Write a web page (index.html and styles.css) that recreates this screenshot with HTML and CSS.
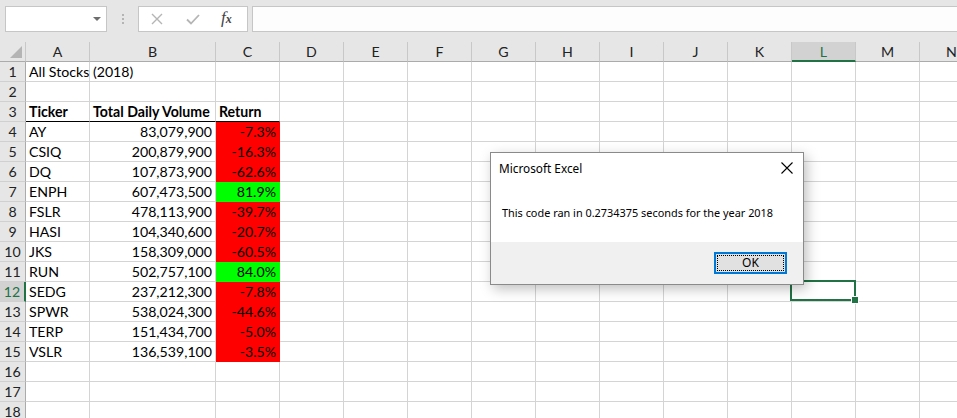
FILE: index.html
```html
<!DOCTYPE html>
<html>
<head>
<meta charset="utf-8">
<link rel="stylesheet" href="styles.css">
</head>
<body>
<div class="app">
  <div class="topbar">
    <div class="namebox"><span class="dd"></span></div>
    <div class="dots"><i></i><i></i><i></i></div>
    <div class="fbtns">
      <svg class="ic-x" width="12" height="12" viewBox="0 0 12 12"><path d="M1 1L11 11M11 1L1 11" stroke="#b5b5b5" stroke-width="1.4" fill="none"/></svg>
      <svg class="ic-ok" width="14" height="11" viewBox="0 0 14 11"><path d="M1 5.5L5 9.5L13 1" stroke="#b5b5b5" stroke-width="1.8" fill="none"/></svg>
      <span class="fx">f<span>x</span></span>
    </div>
    <div class="finput"></div>
  </div>

  <div class="sheet">
    <div class="row hdr">
      <div class="corner"><span class="tri"></span></div>
      <div class="ch">A</div><div class="ch">B</div><div class="ch">C</div><div class="ch">D</div><div class="ch">E</div><div class="ch">F</div><div class="ch">G</div><div class="ch">H</div><div class="ch">I</div><div class="ch">J</div><div class="ch">K</div><div class="ch sel">L</div><div class="ch">M</div><div class="ch">N</div>
    </div>
    <div class="row"><div class="rh">1</div><div class="c">All Stocks (2018)</div><div class="c"></div><div class="c"></div><div class="c"></div><div class="c"></div><div class="c"></div><div class="c"></div><div class="c"></div><div class="c"></div><div class="c"></div><div class="c"></div><div class="c"></div><div class="c"></div><div class="c"></div></div>
    <div class="row"><div class="rh">2</div><div class="c"></div><div class="c"></div><div class="c"></div><div class="c"></div><div class="c"></div><div class="c"></div><div class="c"></div><div class="c"></div><div class="c"></div><div class="c"></div><div class="c"></div><div class="c"></div><div class="c"></div><div class="c"></div></div>
    <div class="row"><div class="rh">3</div><div class="c b bb">Ticker</div><div class="c b bb">Total Daily Volume</div><div class="c b bb">Return</div><div class="c"></div><div class="c"></div><div class="c"></div><div class="c"></div><div class="c"></div><div class="c"></div><div class="c"></div><div class="c"></div><div class="c"></div><div class="c"></div><div class="c"></div></div>
    <div class="row"><div class="rh">4</div><div class="c">AY</div><div class="c r">83,079,900</div><div class="c r red">-7.3%</div><div class="c"></div><div class="c"></div><div class="c"></div><div class="c"></div><div class="c"></div><div class="c"></div><div class="c"></div><div class="c"></div><div class="c"></div><div class="c"></div><div class="c"></div></div>
    <div class="row"><div class="rh">5</div><div class="c">CSIQ</div><div class="c r">200,879,900</div><div class="c r red">-16.3%</div><div class="c"></div><div class="c"></div><div class="c"></div><div class="c"></div><div class="c"></div><div class="c"></div><div class="c"></div><div class="c"></div><div class="c"></div><div class="c"></div><div class="c"></div></div>
    <div class="row"><div class="rh">6</div><div class="c">DQ</div><div class="c r">107,873,900</div><div class="c r red">-62.6%</div><div class="c"></div><div class="c"></div><div class="c"></div><div class="c"></div><div class="c"></div><div class="c"></div><div class="c"></div><div class="c"></div><div class="c"></div><div class="c"></div><div class="c"></div></div>
    <div class="row"><div class="rh">7</div><div class="c">ENPH</div><div class="c r">607,473,500</div><div class="c r green">81.9%</div><div class="c"></div><div class="c"></div><div class="c"></div><div class="c"></div><div class="c"></div><div class="c"></div><div class="c"></div><div class="c"></div><div class="c"></div><div class="c"></div><div class="c"></div></div>
    <div class="row"><div class="rh">8</div><div class="c">FSLR</div><div class="c r">478,113,900</div><div class="c r red">-39.7%</div><div class="c"></div><div class="c"></div><div class="c"></div><div class="c"></div><div class="c"></div><div class="c"></div><div class="c"></div><div class="c"></div><div class="c"></div><div class="c"></div><div class="c"></div></div>
    <div class="row"><div class="rh">9</div><div class="c">HASI</div><div class="c r">104,340,600</div><div class="c r red">-20.7%</div><div class="c"></div><div class="c"></div><div class="c"></div><div class="c"></div><div class="c"></div><div class="c"></div><div class="c"></div><div class="c"></div><div class="c"></div><div class="c"></div><div class="c"></div></div>
    <div class="row"><div class="rh">10</div><div class="c">JKS</div><div class="c r">158,309,000</div><div class="c r red">-60.5%</div><div class="c"></div><div class="c"></div><div class="c"></div><div class="c"></div><div class="c"></div><div class="c"></div><div class="c"></div><div class="c"></div><div class="c"></div><div class="c"></div><div class="c"></div></div>
    <div class="row"><div class="rh">11</div><div class="c">RUN</div><div class="c r">502,757,100</div><div class="c r green">84.0%</div><div class="c"></div><div class="c"></div><div class="c"></div><div class="c"></div><div class="c"></div><div class="c"></div><div class="c"></div><div class="c"></div><div class="c"></div><div class="c"></div><div class="c"></div></div>
    <div class="row"><div class="rh sel">12</div><div class="c">SEDG</div><div class="c r">237,212,300</div><div class="c r red">-7.8%</div><div class="c"></div><div class="c"></div><div class="c"></div><div class="c"></div><div class="c"></div><div class="c"></div><div class="c"></div><div class="c"></div><div class="c active"><span class="handle"></span></div><div class="c"></div><div class="c"></div></div>
    <div class="row"><div class="rh">13</div><div class="c">SPWR</div><div class="c r">538,024,300</div><div class="c r red">-44.6%</div><div class="c"></div><div class="c"></div><div class="c"></div><div class="c"></div><div class="c"></div><div class="c"></div><div class="c"></div><div class="c"></div><div class="c"></div><div class="c"></div><div class="c"></div></div>
    <div class="row"><div class="rh">14</div><div class="c">TERP</div><div class="c r">151,434,700</div><div class="c r red">-5.0%</div><div class="c"></div><div class="c"></div><div class="c"></div><div class="c"></div><div class="c"></div><div class="c"></div><div class="c"></div><div class="c"></div><div class="c"></div><div class="c"></div><div class="c"></div></div>
    <div class="row"><div class="rh">15</div><div class="c">VSLR</div><div class="c r">136,539,100</div><div class="c r red">-3.5%</div><div class="c"></div><div class="c"></div><div class="c"></div><div class="c"></div><div class="c"></div><div class="c"></div><div class="c"></div><div class="c"></div><div class="c"></div><div class="c"></div><div class="c"></div></div>
    <div class="row"><div class="rh">16</div><div class="c"></div><div class="c"></div><div class="c"></div><div class="c"></div><div class="c"></div><div class="c"></div><div class="c"></div><div class="c"></div><div class="c"></div><div class="c"></div><div class="c"></div><div class="c"></div><div class="c"></div><div class="c"></div></div>
    <div class="row"><div class="rh">17</div><div class="c"></div><div class="c"></div><div class="c"></div><div class="c"></div><div class="c"></div><div class="c"></div><div class="c"></div><div class="c"></div><div class="c"></div><div class="c"></div><div class="c"></div><div class="c"></div><div class="c"></div><div class="c"></div></div>
    <div class="row"><div class="rh">18</div><div class="c"></div><div class="c"></div><div class="c"></div><div class="c"></div><div class="c"></div><div class="c"></div><div class="c"></div><div class="c"></div><div class="c"></div><div class="c"></div><div class="c"></div><div class="c"></div><div class="c"></div><div class="c"></div></div>
  </div>

  <div class="dialog">
    <div class="dlg-body">
      <div class="dlg-title">
        <span>Microsoft Excel</span>
        <svg class="close" width="12" height="12" viewBox="0 0 12 12"><path d="M0.5 0.5L11.5 11.5M11.5 0.5L0.5 11.5" stroke="#000" stroke-width="1.1" fill="none"/></svg>
      </div>
      <div class="dlg-msg">This code ran in 0.2734375 seconds for the year 2018</div>
    </div>
    <div class="dlg-foot">
      <div class="okbtn"><span class="focus">OK</span></div>
    </div>
  </div>
</div>
</body>
</html>
```
FILE: styles.css
```css
html, body {
  margin: 0;
  padding: 0;
  background: #fff;
  overflow: hidden;
}
.app {
  position: relative;
  width: 957px;
  height: 418px;
  overflow: hidden;
  font-family: "Lato", "Liberation Sans", sans-serif;
}
.topbar {
  height: 42px;
  background: #e6e6e6;
  display: flex;
  align-items: flex-start;
  padding-top: 6px;
  box-sizing: border-box;
  padding-left: 5px;
}
.namebox {
  width: 102px;
  height: 26px;
  box-sizing: border-box;
  background: #fff;
  border: 1px solid #c6c6c6;
  position: relative;
}
.dd {
  position: absolute;
  left: 87px;
  top: 10px;
  width: 0;
  height: 0;
  border-left: 4px solid transparent;
  border-right: 4px solid transparent;
  border-top: 4px solid #6d6d6d;
}
.dots {
  width: 31px;
  height: 26px;
  display: flex;
  flex-direction: column;
  align-items: center;
  justify-content: center;
  gap: 2px;
}
.dots i {
  display: block;
  width: 2px;
  height: 2px;
  background: #b4b4b4;
}
.fbtns {
  width: 110px;
  height: 26px;
  box-sizing: border-box;
  background: #fff;
  border: 1px solid #c6c6c6;
  display: flex;
  align-items: center;
  padding-left: 12px;
}
.ic-x { margin-right: 23px; }
.ic-ok { margin-right: 21px; }
.fx {
  font-family: "Liberation Serif", serif;
  font-style: italic;
  font-size: 17px;
  color: #444;
  line-height: 1;
  margin-top: -3px;
}
.fx span {
  font-size: 12px;
  font-weight: bold;
}
.finput {
  margin-left: 4px;
  flex: 1;
  height: 26px;
  box-sizing: border-box;
  background: #fdfdfd;
  border: 1px solid #c6c6c6;
  border-right: none;
}

.sheet {
  font-size: 14.15px;
}
.row {
  display: grid;
  grid-template-columns: 26px 64px 126px 64px repeat(11, 64px);
  height: 20px;
}
.row > div {
  box-sizing: border-box;
  height: 20px;
  border-right: 1px solid #d4d4d4;
  border-bottom: 1px solid #d4d4d4;
  line-height: 20px;
  white-space: nowrap;
  overflow: visible;
  color: #000;
}
.hdr > div {
  background: #e6e6e6;
  text-align: center;
  color: #222;
  border-right: 1px solid #c8c8c8;
  border-bottom: 1px solid #ababab;
}
.corner {
  position: relative;
}
.tri {
  position: absolute;
  right: 3px;
  bottom: 3px;
  width: 0;
  height: 0;
  border-left: 12px solid transparent;
  border-bottom: 12px solid #b4b4b4;
}
.hdr .ch.sel {
  background: #d2d2d2;
  color: #217346;
  border-bottom: 2px solid #217346;
}
.row > .rh {
  background: #e6e6e6;
  text-align: center;
  color: #222;
  border-right: 1px solid #ababab;
  border-bottom: 1px solid #d0d0d0;
}
.row > .rh.sel {
  background: #d2d2d2;
  color: #217346;
  border-right: 2px solid #217346;
}
.c {
  padding-left: 3px;
}
.row > .c.r {
  text-align: right;
  padding-left: 0;
  padding-right: 3px;
}
.b { font-weight: bold; }
.row > .bb { border-bottom: 1px solid #000; }
.row > .red {
  background: #ff0000;
  border-right-color: #ff0000;
  border-bottom-color: #ff0000;
}
.row > .green {
  background: #00ff00;
  border-right-color: #00ff00;
  border-bottom-color: #00ff00;
}
.row > .active {
  position: relative;
}
.active::after {
  content: "";
  position: absolute;
  left: -2px;
  top: -2px;
  width: 66px;
  height: 21px;
  box-sizing: border-box;
  border: 2px solid #217346;
}
.handle {
  position: absolute;
  right: -4px;
  bottom: -3px;
  width: 6px;
  height: 6px;
  background: #217346;
  border: 1px solid #fff;
  z-index: 2;
}

.dialog {
  position: absolute;
  left: 490px;
  top: 152px;
  width: 314px;
  height: 133px;
  box-sizing: border-box;
  border: 1px solid #8a8a8a;
  background: #fff;
  box-shadow: 3px 4px 12px rgba(0,0,0,0.25);
  font-family: "Noto Sans", "Open Sans", sans-serif;
  font-size: 10.9px;
  color: #000;
  display: flex;
  flex-direction: column;
}
.dlg-body {
  height: 89px;
  background: #fff;
}
.dlg-title {
  display: flex;
  justify-content: space-between;
  align-items: center;
  height: 30px;
  padding-left: 8px;
  padding-right: 10px;
  font-size: 11.8px;
}
.dlg-msg {
  padding-left: 11px;
  padding-top: 22px;
}
.dlg-foot {
  flex: 1;
  background: #f0f0f0;
  display: flex;
  justify-content: flex-end;
  align-items: flex-start;
  padding-top: 10px;
  padding-right: 16px;
}
.okbtn {
  width: 73px;
  height: 22px;
  box-sizing: border-box;
  border: 2px solid #0078d7;
  background: #e1e1e1;
  padding: 1px;
}
.focus {
  display: block;
  height: 100%;
  box-sizing: border-box;
  border: 1px dotted #000;
  text-align: center;
  line-height: 14px;
  font-size: 12px;
}
```
